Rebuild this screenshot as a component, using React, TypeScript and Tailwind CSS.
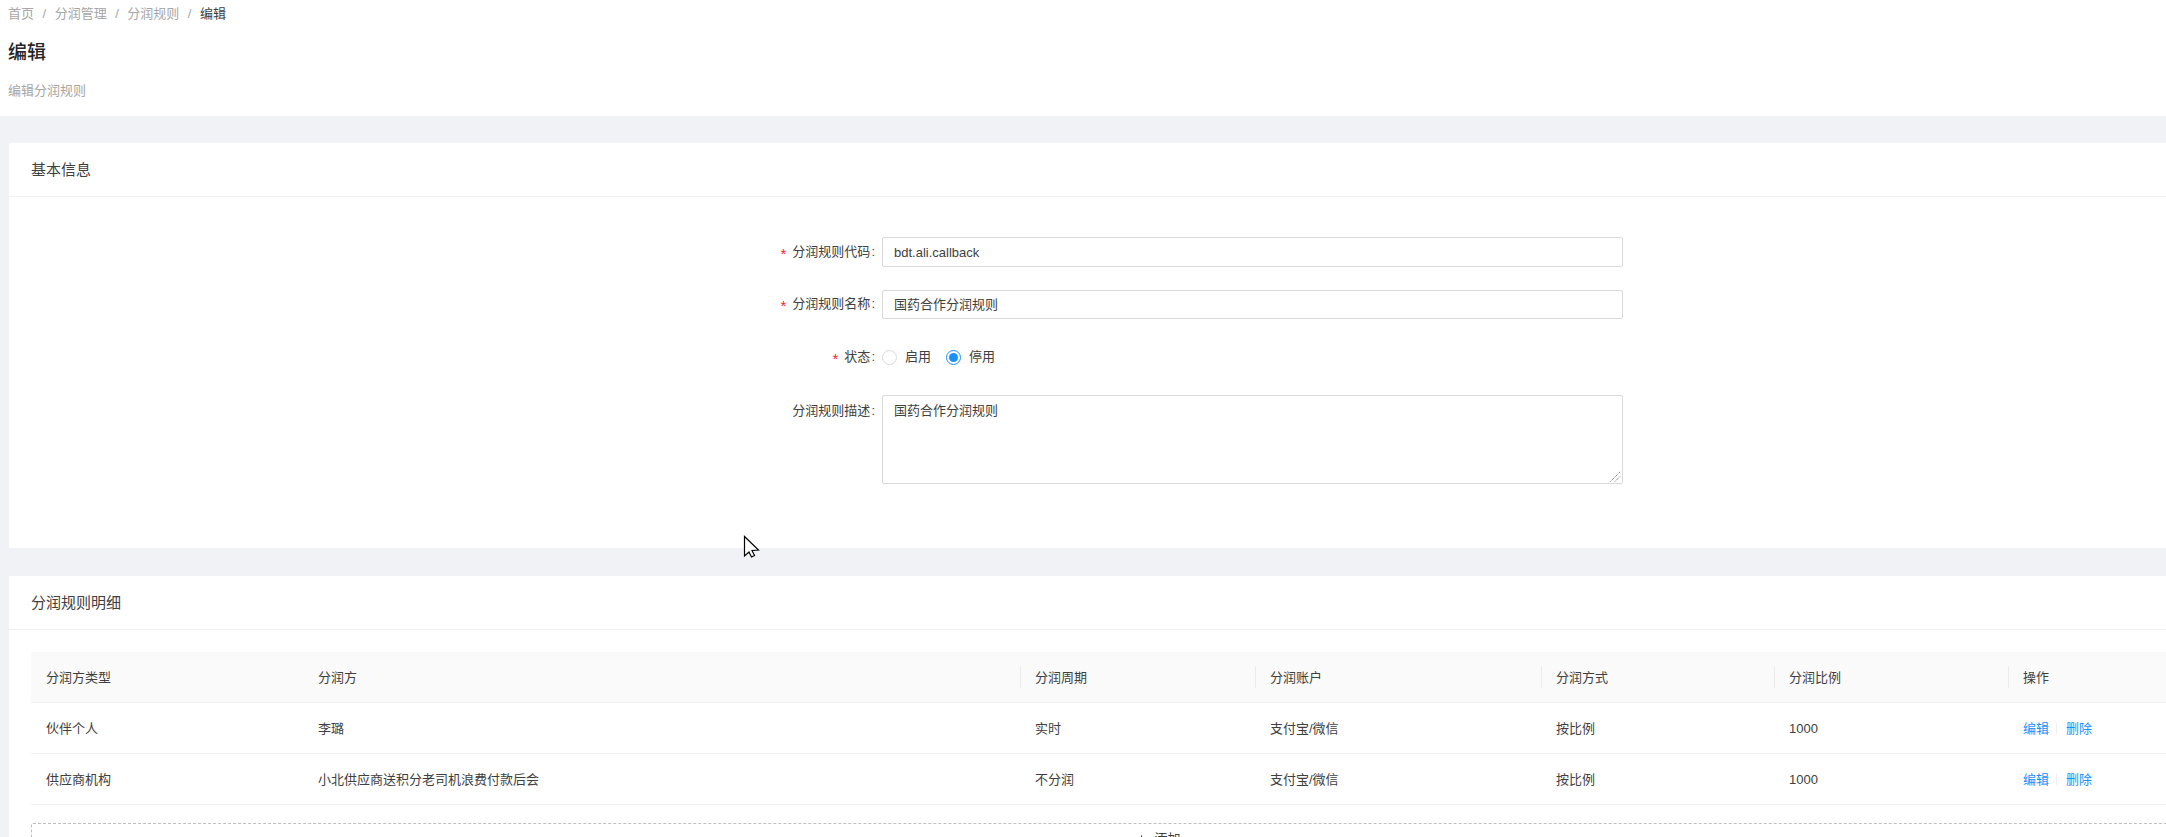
import React from "react";
import { Plus } from "lucide-react";

const font = "font-['Liberation_Sans','Noto_Sans_CJK_SC',sans-serif]";

const columns = [
  { title: "分润方类型", width: "w-[272px]" },
  { title: "分润方", width: "w-[717px]" },
  { title: "分润周期", width: "w-[235px]" },
  { title: "分润账户", width: "w-[286px]" },
  { title: "分润方式", width: "w-[233px]" },
  { title: "分润比例", width: "w-[234px]" },
  { title: "操作", width: "w-[285px]" },
];

const rows = [
  ["伙伴个人", "李璐", "实时", "支付宝/微信", "按比例", "1000"],
  ["供应商机构", "小北供应商送积分老司机浪费付款后会", "不分润", "支付宝/微信", "按比例", "1000"],
];

const FormRow = ({
  label,
  required,
  top,
  children,
  className,
}: {
  label: string;
  required?: boolean;
  top?: boolean;
  children: React.ReactNode;
  className?: string;
}) => (
  <div className={`flex ${top ? "items-start" : "items-center"} ${className ?? ""}`}>
    <div className={`w-[882px] shrink-0 flex justify-end pr-[7px] text-[13px] leading-[20px] text-[#404040] ${top ? "pt-[6px]" : "pt-[1px]"}`}>
      {required && <span className="text-[15px] text-[#f5222d] mr-[6px] pt-[2px]">*</span>}
      <span>{label}</span>
      <span className="ml-[1px]">:</span>
    </div>
    {children}
  </div>
);

const Radio = ({ label, checked }: { label: string; checked?: boolean }) => (
  <div className="flex items-center mr-[15px]">
    <span
      className={`w-[15px] h-[15px] rounded-full border flex items-center justify-center ${
        checked ? "border-[#1890ff]" : "border-[#d9d9d9]"
      }`}
    >
      {checked && <span className="w-[9px] h-[9px] rounded-full bg-[#1890ff]" />}
    </span>
    <span className="ml-[8px] text-[13px] text-[#404040]">{label}</span>
  </div>
);

export default function App() {
  return (
    <div className={`w-[2166px] h-[837px] overflow-hidden bg-[#f0f2f5] ${font}`}>
      <div className="w-[2315px]">
        <header className="h-[116px] bg-white pl-[8px] pt-[4px]">
          <nav className="flex items-center h-[20px] text-[13px] text-[#a6a6a6] leading-[20px]">
            <span>首页</span>
            <span className="mx-[8.5px]">/</span>
            <span>分润管理</span>
            <span className="mx-[8.5px]">/</span>
            <span>分润规则</span>
            <span className="mx-[8.5px]">/</span>
            <span className="text-[#404040]">编辑</span>
          </nav>
          <h1 className="mt-[16px] text-[19px] leading-[26px] font-medium text-[#262626]">编辑</h1>
          <p className="mt-[15px] text-[13px] leading-[20px] text-[#a6a6a6]">编辑分润规则</p>
        </header>

        <main className="pl-[9px] pt-[27px]">
          <section className="bg-white h-[405px]">
            <div className="h-[54px] flex items-center pl-[22px] pt-[2px] border-b border-[#f0f0f0] text-[15px] text-[#404040]">
              基本信息
            </div>
            <div className="pt-[40px] -ml-[9px]">
              <FormRow label="分润规则代码" required>
                <div className="w-[741px] h-[30px] border border-[#d9d9d9] rounded-[2px] pl-[11px] pt-[1px] flex items-center text-[13px] text-[#404040]">
                  bdt.ali.callback
                </div>
              </FormRow>
              <FormRow label="分润规则名称" required className="mt-[23px]">
                <div className="w-[741px] h-[29px] border border-[#d9d9d9] rounded-[2px] pl-[11px] flex items-center text-[13px] text-[#404040]">
                  国药合作分润规则
                </div>
              </FormRow>
              <FormRow label="状态" required className="mt-[28px] h-[20px]">
                <Radio label="启用" />
                <Radio label="停用" checked />
              </FormRow>
              <FormRow label="分润规则描述" top className="mt-[28px]">
                <div className="relative w-[741px] h-[89px] border border-[#d9d9d9] rounded-[2px] pl-[11px] pt-[5px] text-[13px] leading-[20px] text-[#404040]">
                  国药合作分润规则
                  <svg className="absolute right-[1px] bottom-[1px]" width="11" height="11" viewBox="0 0 11 11">
                    <path d="M0.5 10.5 L10.5 0.5 M5 10.5 L10.5 5" stroke="#555" strokeWidth="1" strokeDasharray="1 1" fill="none" />
                  </svg>
                </div>
              </FormRow>
            </div>
          </section>

          <section className="mt-[28px] bg-white h-[300px]">
            <div className="h-[54px] flex items-center pl-[22px] pt-[2px] border-b border-[#f0f0f0] text-[15px] text-[#404040]">
              分润规则明细
            </div>
            <div className="px-[22px] pt-[22px]">
              <div className="flex h-[51px] bg-[#fafafa] border-b border-[#f0f0f0] text-[13px] text-[#404040]">
                {columns.map((c, i) => (
                  <div key={c.title} className={`${c.width} shrink-0 flex items-center pl-[15px] pt-[1px] relative`}>
                    {i > 1 && <span className="absolute left-0 top-[14px] h-[22px] w-px bg-[#ececec]" />}
                    {c.title}
                  </div>
                ))}
              </div>
              {rows.map((r, idx) => (
                <div key={idx} className="flex h-[51px] border-b border-[#f0f0f0] text-[13px] text-[#404040]">
                  {r.map((v, i) => (
                    <div key={i} className={`${columns[i].width} shrink-0 flex items-center pl-[15px] pt-[1px]`}>
                      {v}
                    </div>
                  ))}
                  <div className={`${columns[6].width} shrink-0 flex items-center pl-[15px] pt-[1px] text-[#1890ff]`}>
                    <span>编辑</span>
                    <span className="w-px h-[11px] bg-[#f0f0f0] ml-[7px] mr-[9px]" />
                    <span>删除</span>
                  </div>
                </div>
              ))}
              <div className="mt-[18px] mr-[8px] h-[32px] border border-dashed border-[#bfbfbf] rounded-[2px] flex items-center justify-center text-[13px] text-[#404040]">
                <Plus size={13} className="mr-[6px]" />
                添加
              </div>
            </div>
          </section>
        </main>
      </div>

      <svg className="absolute left-[743px] top-[535px]" width="18" height="24" viewBox="0 0 18 24">
        <path d="M1.5 1.5 L1.5 21 L6 17 L8.5 22 L11.5 20.5 L9 15.5 L15.5 15 Z" fill="#fff" stroke="#000" strokeWidth="1.2" />
      </svg>
    </div>
  );
}
